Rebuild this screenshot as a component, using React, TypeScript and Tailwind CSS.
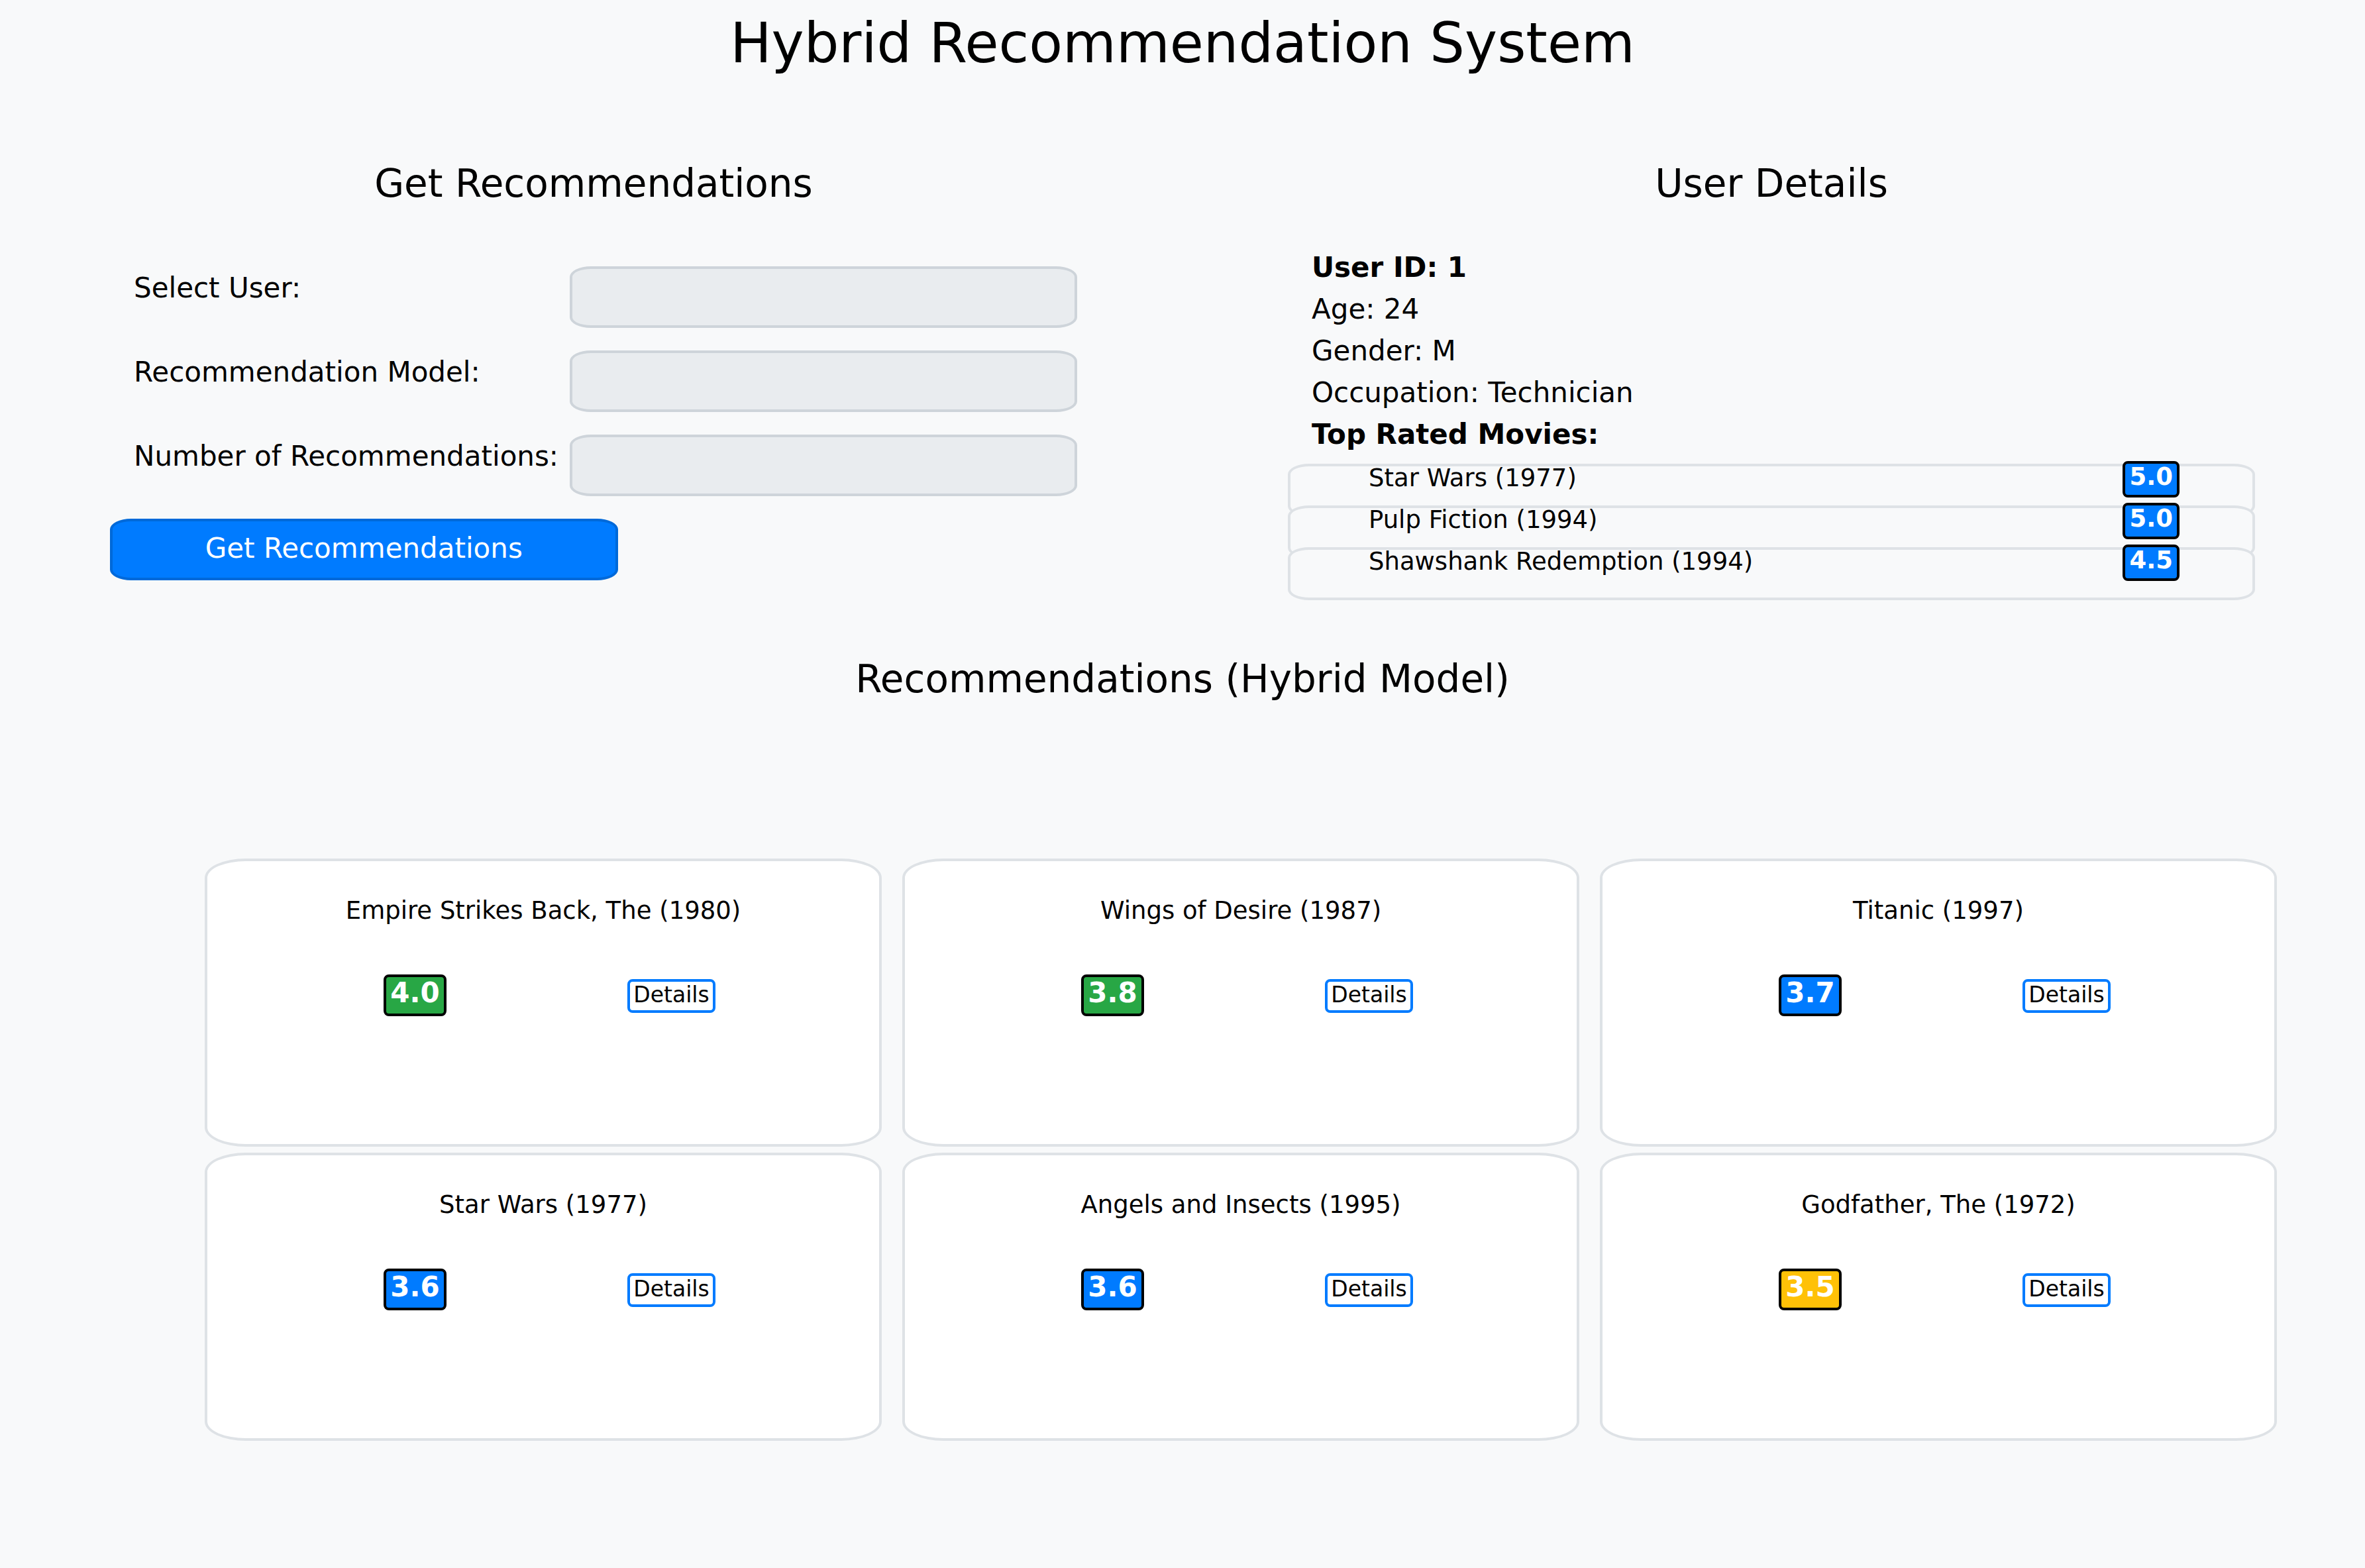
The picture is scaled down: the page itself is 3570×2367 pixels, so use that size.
import type { ReactNode } from "react";

type Movie = { title: string; rating: string };

const topRated: Movie[] = [
  { title: "Star Wars (1977)", rating: "5.0" },
  { title: "Pulp Fiction (1994)", rating: "5.0" },
  { title: "Shawshank Redemption (1994)", rating: "4.5" },
];

const recommendations: Movie[] = [
  { title: "Empire Strikes Back, The (1980)", rating: "4.0" },
  { title: "Wings of Desire (1987)", rating: "3.8" },
  { title: "Titanic (1997)", rating: "3.7" },
  { title: "Star Wars (1977)", rating: "3.6" },
  { title: "Angels and Insects (1995)", rating: "3.6" },
  { title: "Godfather, The (1972)", rating: "3.5" },
];

const fieldClass =
  "block h-[93px] w-[52.5%] appearance-none rounded-[32px/16px] border-4 border-[#ced4da] bg-[#e9ecef] px-6 text-[42px] text-black";

function badgeColor(rating: string) {
  const value = Number(rating);
  if (value >= 3.75) return "bg-[#28a745]";
  if (value > 3.5) return "bg-[#007bff]";
  return "bg-[#ffc107]";
}

function SectionHeading({ children }: { children: ReactNode }) {
  return <h2 className="text-center text-[58px] leading-[72px]">{children}</h2>;
}

function Field({ id, label, children }: { id: string; label: string; children: ReactNode }) {
  return (
    <div className="flex items-start">
      <label htmlFor={id} className="flex-1 whitespace-nowrap pl-9 text-[42px] leading-[66px]">
        {label}
      </label>
      {children}
    </div>
  );
}

function RecommendationForm() {
  return (
    <section>
      <SectionHeading>Get Recommendations</SectionHeading>
      <form className="mt-[89px] flex flex-col gap-[34px] px-[159px]" onSubmit={(e) => e.preventDefault()}>
        <Field id="user" label="Select User:">
          <select id="user" className={fieldClass} />
        </Field>
        <Field id="model" label="Recommendation Model:">
          <select id="model" className={fieldClass} />
        </Field>
        <Field id="count" label="Number of Recommendations:">
          <input id="count" type="text" inputMode="numeric" className={fieldClass} />
        </Field>
        <button
          type="submit"
          className="h-[93px] w-[52.5%] rounded-[32px/16px] border-4 border-[#0069d9] bg-[#007bff] pb-1 text-[42px] leading-[64px] text-white"
        >
          Get Recommendations
        </button>
      </form>
    </section>
  );
}

function UserDetails() {
  return (
    <section>
      <SectionHeading>User Details</SectionHeading>
      <div className="mt-[59px] px-[159px]">
        <div className="pl-9 text-[42px] leading-[63px]">
          <p className="font-bold">User ID: 1</p>
          <p>Age: 24</p>
          <p>Gender: M</p>
          <p>Occupation: Technician</p>
          <h3 className="font-bold">Top Rated Movies:</h3>
        </div>
        <ul className="mt-[30px]">
          {topRated.map((movie) => (
            <li
              key={movie.title}
              className="-mt-[17px] flex h-20 items-start justify-between rounded-[32px/16px] border-4 border-[#dee2e6] bg-[#f8f9fa] pl-[118px] pr-[110px]"
            >
              <span className="text-[37px] leading-[36px]">{movie.title}</span>
              <span className="-mt-2 rounded-lg border-4 border-black bg-[#007bff] px-1.5 pb-[7px] text-[37px] font-bold leading-10 text-white">
                {movie.rating}
              </span>
            </li>
          ))}
        </ul>
      </div>
    </section>
  );
}

function MovieCard({ movie }: { movie: Movie }) {
  return (
    <li className="rounded-[62px/29px] border-4 border-[#dee2e6] bg-white pb-[193px] pt-[47px]">
      <h3 className="text-center text-[37px] leading-[56px]">{movie.title}</h3>
      <div className="mt-[68px] grid grid-cols-2 items-baseline justify-items-center px-[120px]">
        <span
          className={`rounded-lg border-4 border-black px-1.5 pb-[7px] text-[42px] font-bold leading-[48px] text-white ${badgeColor(movie.rating)}`}
        >
          {movie.rating}
        </span>
        <button
          type="button"
          className="rounded-lg border-4 border-[#007bff] bg-white px-[5px] pb-[3px] text-[33px] leading-10"
        >
          Details
        </button>
      </div>
    </li>
  );
}

export default function App() {
  return (
    <main className="min-h-screen bg-[#f8f9fa] pb-24 font-['DejaVu_Sans',sans-serif] text-black">
      <h1 className="pt-[18px] text-center text-[83px] leading-[96px]">Hybrid Recommendation System</h1>
      <div className="mt-[127px] grid grid-cols-2 px-[7px]">
        <RecommendationForm />
        <UserDetails />
      </div>
      <section className="mt-[83px]">
        <SectionHeading>Recommendations (Hybrid Model)</SectionHeading>
        <ul className="mt-[235px] grid grid-cols-3 gap-x-[31px] gap-y-[9px] pl-[309px] pr-[133px]">
          {recommendations.map((movie) => (
            <MovieCard key={movie.title} movie={movie} />
          ))}
        </ul>
      </section>
    </main>
  );
}
